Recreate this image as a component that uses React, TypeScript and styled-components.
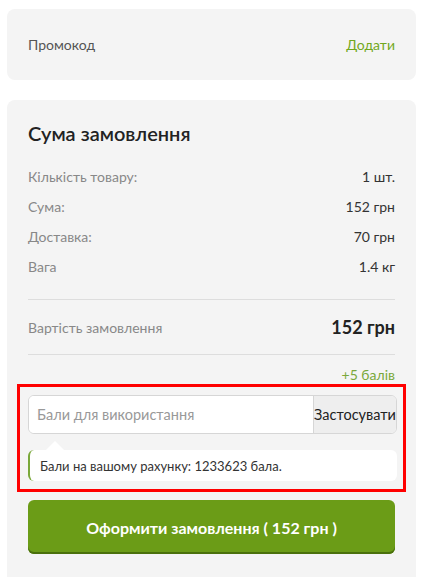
import React from "react";
import styled, { createGlobalStyle } from "styled-components";

const Global = createGlobalStyle`
  html, body { margin: 0; padding: 0; background: #fff; }
  body { font-family: "Lato", "Noto Sans", sans-serif; }
  * { box-sizing: border-box; }
`;

const Page = styled.div`
  padding: 9px 6px 0 7px;
  display: flex;
  flex-direction: column;
  gap: 20px;
`;

const Card = styled.section<{ $open?: boolean }>`
  background: #f4f4f4;
  border-radius: ${(p) => (p.$open ? "8px 8px 0 0" : "8px")};
  padding: ${(p) => (p.$open ? "20px 21px 24px 21px" : "0 21px")};
`;

const PromoRow = styled.div`
  height: 71px;
  display: flex;
  align-items: center;
  justify-content: space-between;
  font-size: 14px;
`;

const PromoLabel = styled.span`
  color: #555;
`;

const LinkText = styled.span`
  color: #72a81c;
`;

const Title = styled.h2`
  margin: 0 0 15px 0;
  font-size: 20px;
  font-weight: 600;
  color: #222;
  line-height: 26px;
`;

const Row = styled.div`
  display: flex;
  justify-content: space-between;
  align-items: center;
  height: 30px;
  font-size: 14px;
`;

const Label = styled.span`
  color: #888;
`;

const Value = styled.span`
  color: #333;
`;

const Spacer = styled.div`
  height: 18px;
`;

const Divider = styled.hr`
  border: 0;
  border-top: 1px solid #ddd;
  margin: 0;
`;

const TotalRow = styled.div`
  display: flex;
  justify-content: space-between;
  align-items: center;
  height: 54px;
  font-size: 14px;
`;

const TotalValue = styled.span`
  font-size: 18px;
  font-weight: 700;
  color: #222;
`;

const Bonus = styled.div`
  text-align: right;
  color: #7aa83a;
  font-size: 14px;
  margin-top: 12px;
  line-height: 16px;
`;

const Highlight = styled.div`
  margin: 1px -11px 0;
  border: 3px solid #ff0000;
  padding: 8px 6px 8px 8px;
`;

const InputGroup = styled.div`
  display: flex;
  height: 39px;
  border: 1px solid #d6d6d6;
  border-radius: 6px;
  overflow: hidden;
  background: #fff;
`;

const Input = styled.input`
  flex: 1;
  min-width: 0;
  border: 0;
  outline: none;
  padding: 0 8px;
  font-family: inherit;
  font-size: 14.5px;
  color: #333;
  &::placeholder { color: #999; }
`;

const ApplyButton = styled.button`
  border: 0;
  border-left: 1px solid #d6d6d6;
  background: #eeeeee;
  font-family: inherit;
  font-size: 14.5px;
  color: #222;
  padding: 0;
  width: 83px;
  cursor: pointer;
`;

const Tip = styled.div`
  position: relative;
  margin-top: 16px;
  background: #fff;
  border-radius: 6px;
  border-left: 2px solid #7aa83a;
  height: 31px;
  display: flex;
  align-items: center;
  padding-left: 10px;
  font-size: 13px;
  color: #333;
  &::before {
    content: "";
    position: absolute;
    left: 16px;
    top: -9px;
    border-left: 9px solid transparent;
    border-right: 9px solid transparent;
    border-bottom: 9px solid #fff;
  }
`;

const Submit = styled.button`
  margin-top: 8px;
  width: 100%;
  height: 54px;
  border: 0;
  border-radius: 6px;
  background: #6b9c17;
  box-shadow: inset 0 -2px 0 #4a700c;
  color: #fff;
  font-family: inherit;
  font-size: 16px;
  font-weight: 700;
  cursor: pointer;
`;

const rows: [string, string][] = [
  ["Кількість товару:", "1 шт."],
  ["Сума:", "152 грн"],
  ["Доставка:", "70 грн"],
  ["Вага", "1.4 кг"],
];

export default function App() {
  return (
    <>
      <Global />
      <Page>
        <Card>
          <PromoRow>
            <PromoLabel>Промокод</PromoLabel>
            <LinkText>Додати</LinkText>
          </PromoRow>
        </Card>
        <Card $open>
          <Title>Сума замовлення</Title>
          {rows.map(([l, v]) => (
            <Row key={l}>
              <Label>{l}</Label>
              <Value>{v}</Value>
            </Row>
          ))}
          <Spacer />
          <Divider />
          <TotalRow>
            <Label>Вартість замовлення</Label>
            <TotalValue>152 грн</TotalValue>
          </TotalRow>
          <Divider />
          <Bonus>+5 балів</Bonus>
          <Highlight>
            <InputGroup>
              <Input placeholder="Бали для використання" />
              <ApplyButton>Застосувати</ApplyButton>
            </InputGroup>
            <Tip>Бали на вашому рахунку: 1233623 бала.</Tip>
          </Highlight>
          <Submit>Оформити замовлення ( 152 грн )</Submit>
        </Card>
      </Page>
    </>
  );
}
